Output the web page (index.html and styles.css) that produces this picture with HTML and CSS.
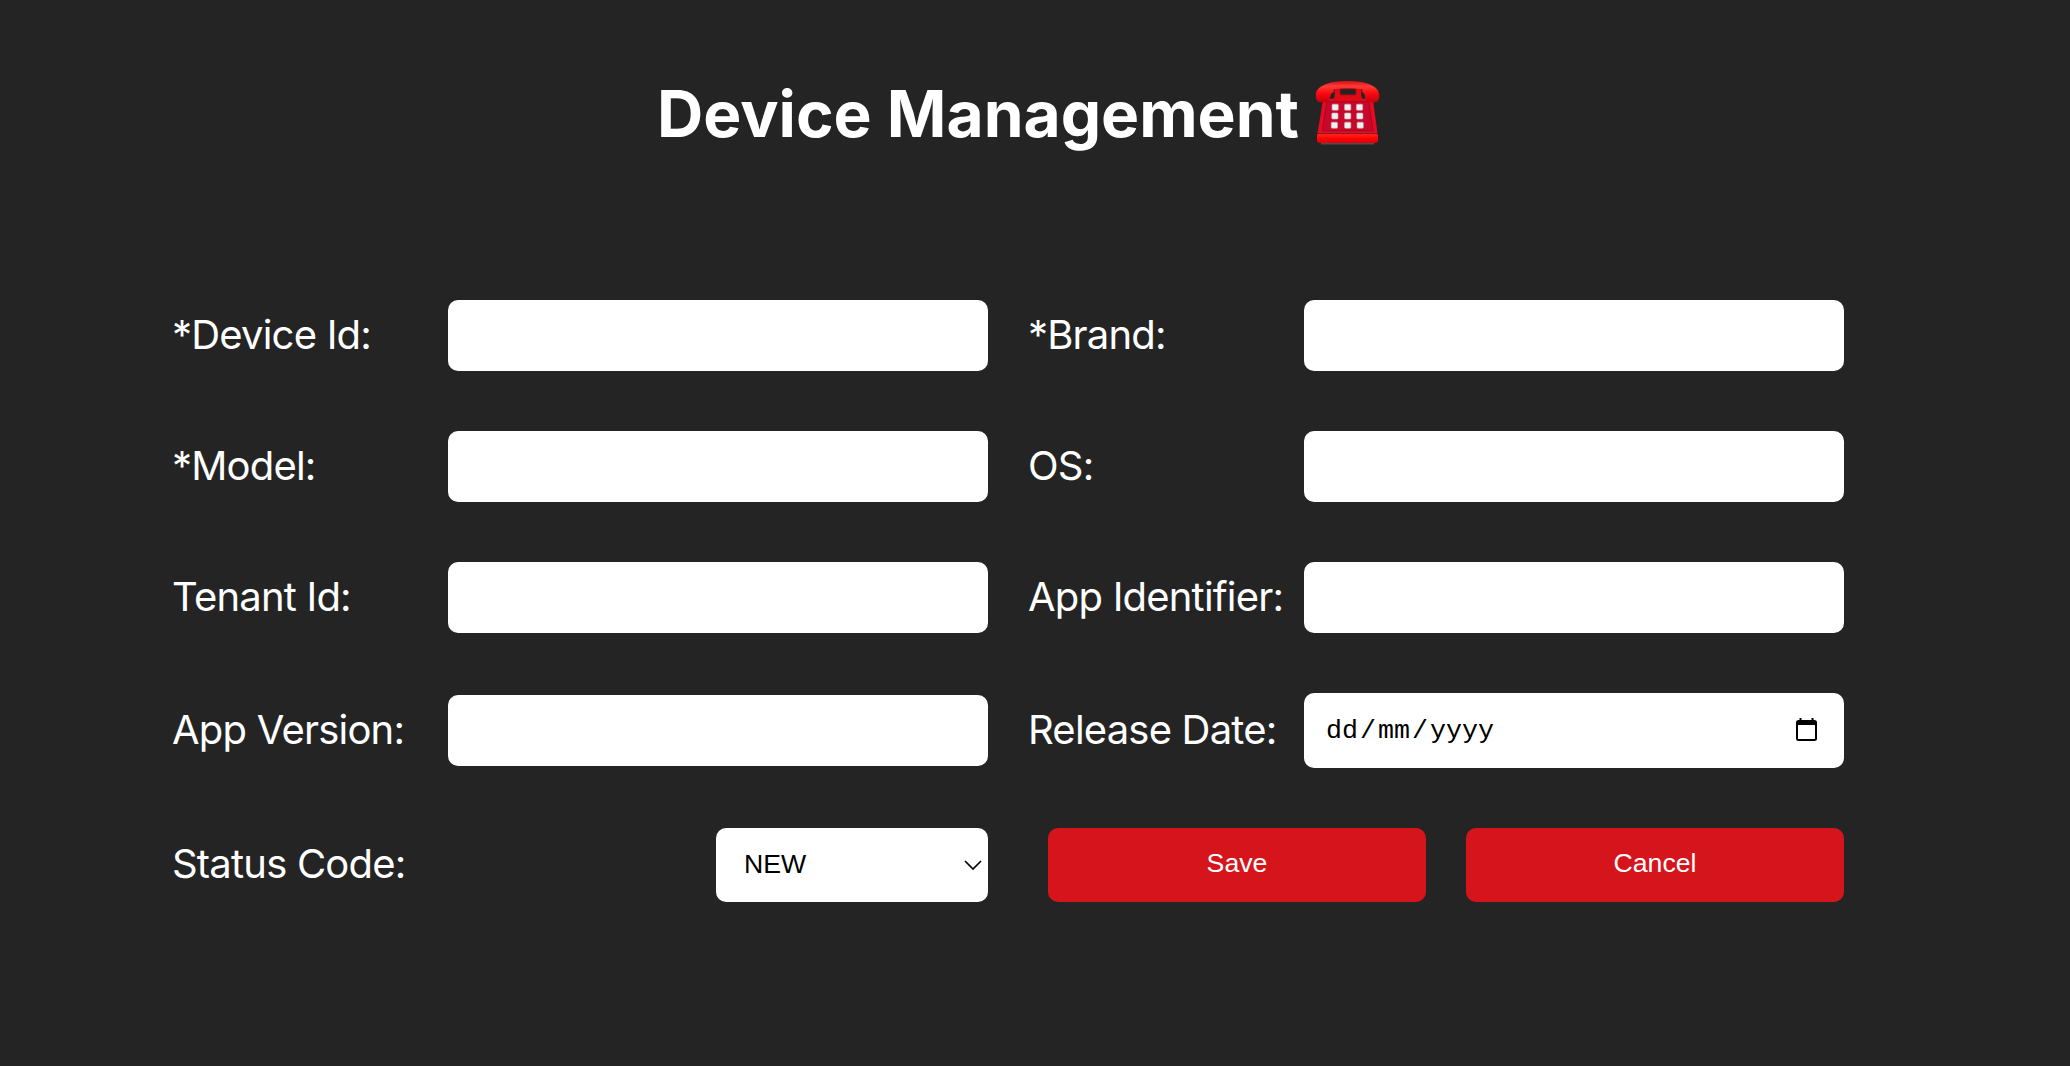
FILE: index.html
```html
<!DOCTYPE html>
<html lang="en">
<head>
<meta charset="utf-8">
<title>Device Management</title>
<link rel="stylesheet" href="styles.css">
</head>
<body>
<main class="page">
  <h1 class="title">
    <span class="title-text">Device Management</span>
    <svg class="phone" viewBox="0 0 66 66" aria-hidden="true">
      <defs>
        <linearGradient id="handset" x1="0" y1="0" x2="0" y2="1">
          <stop offset="0" stop-color="#d80c14"/><stop offset=".25" stop-color="#ff3b36"/><stop offset=".6" stop-color="#fa0710"/><stop offset="1" stop-color="#c4000c"/>
        </linearGradient>
        <linearGradient id="base" x1="0" y1="0" x2="0" y2="1">
          <stop offset="0" stop-color="#ff2420"/><stop offset=".5" stop-color="#ff0505"/><stop offset="1" stop-color="#dc0006"/>
        </linearGradient>
      </defs>
      <path d="M6 64h54v1.500H6z" fill="#4b4f50"/>
      <path d="M9 19h48q1.500 0 2 2l4.500 33H2.500L8 21q.5-2 1-2z" fill="#e50b20"/>
      <path d="M12 22h42.500l4.500 29.500H7.500z" fill="#c9062c" stroke="#a80526" stroke-width="1"/>
      <path d="M17 21l3-4V8h27v9l3 4z" fill="#e00a14"/>
      <rect x="25.500" y="9" width="16" height="6" rx="1.500" fill="#252324" stroke="#8e0c17"/>
      <path d="M.8 15C1 7 12 1 33 1s32 6 32.200 14q.3 7.500-4.200 7.500h-5q-4.500 0-5-4l-.6-3.500q-.4-1.800-2.400-2.500V9.500q-15-2.500-29 0v3q-2.500 1-3 2.500l-1 3.500q-1 4-5 4H5Q.8 22.500.8 15z" fill="url(#handset)"/>
      <path d="M3.500 54.500h59q1.500 0 1.500 2V61q0 3-3 3H5q-3 0-3-3v-4.500q0-2 1.500-2z" fill="url(#base)"/>
      <g fill="#eef1ef" stroke="#b9aeb0" stroke-width=".6">
        <rect x="17.300" y="24.500" width="6.400" height="6.200" rx="1"/><rect x="30" y="24.500" width="6.400" height="6.200" rx="1"/><rect x="42" y="24.500" width="6.400" height="6.200" rx="1"/>
        <rect x="17" y="33.500" width="6.400" height="6.200" rx="1"/><rect x="30" y="33.500" width="6.400" height="6.200" rx="1"/><rect x="42.300" y="33.500" width="6.400" height="6.200" rx="1"/>
        <rect x="16.500" y="42.800" width="6.400" height="6.200" rx="1"/><rect x="30" y="42.800" width="6.400" height="6.200" rx="1"/><rect x="42.700" y="42.800" width="6.400" height="6.200" rx="1"/>
      </g>
    </svg>
  </h1>

  <form class="form">
    <label class="label" for="device">*Device Id:</label>
    <input class="field" id="device" type="text">
    <label class="label second" for="brand">*Brand:</label>
    <input class="field" id="brand" type="text">

    <label class="label" for="model">*Model:</label>
    <input class="field" id="model" type="text">
    <label class="label second" for="os">OS:</label>
    <input class="field" id="os" type="text">

    <label class="label" for="tenant">Tenant Id:</label>
    <input class="field" id="tenant" type="text">
    <label class="label second" for="app">App Identifier:</label>
    <input class="field" id="app" type="text">

    <label class="label" for="version">App Version:</label>
    <input class="field" id="version" type="text">
    <span class="label second">Release Date:</span>
    <div class="field date">
      <span class="date-text"><span>dd</span><span class="slash">/</span><span>mm</span><span class="slash">/</span><span>yyyy</span></span>
      <svg class="calendar" viewBox="0 0 21 23" aria-hidden="true">
        <path fill-rule="evenodd" d="M3.500 0h2v2h10V0h2v2h1Q21 2 21 4.500v16q0 2.500-2.500 2.500h-16Q0 23 0 20.500v-16Q0 2 2.500 2h1zM2 7v14h17V7z"/>
      </svg>
    </div>

    <span class="label">Status Code:</span>
    <div class="field select">
      <span>NEW</span>
      <svg class="chevron" viewBox="0 0 18 10" aria-hidden="true"><path d="M1 1l8 8 8-8" fill="none" stroke="#000" stroke-width="1.700"/></svg>
    </div>
    <div class="actions">
      <button class="button" type="button">Save</button>
      <button class="button" type="button">Cancel</button>
    </div>
  </form>
</main>
</body>
</html>
```
FILE: styles.css
```css
* {
  box-sizing: border-box;
}

body {
  margin: 0;
  min-height: 100vh;
  background: #242424;
  color: #fff;
  font-family: Inter, "Liberation Sans", sans-serif;
}

.page {
  width: 1672px;
  margin-left: 172px;
  padding-top: 72px;
}

.title {
  display: flex;
  align-items: center;
  gap: 16px;
  height: 84px;
  margin: 0 0 144px;
  padding-left: 485px;
  font-size: 64px;
  font-weight: 700;
  line-height: 84px;
  white-space: nowrap;
}

.phone {
  width: 65px;
  height: 65px;
  margin-bottom: 3px;
}

.form {
  display: grid;
  grid-template-columns: 276px 540px 316px 540px;
  row-gap: 60px;
  align-items: center;
}

.label {
  padding-bottom: 2px;
  font-size: 40px;
  line-height: 60px;
  letter-spacing: -0.8px;
  white-space: nowrap;
}

.second {
  padding-left: 40px;
}

.field {
  width: 100%;
  height: 71px;
  padding: 0 20px;
  border: 0;
  border-radius: 10px;
  background: #fff;
  color: #000;
  font: 26.667px "Liberation Sans", Arial, sans-serif;
}

.date {
  display: flex;
  align-items: center;
  justify-content: space-between;
  height: 75px;
  padding: 0 27px 0 22px;
  font-family: "Liberation Mono", "Courier New", monospace;
}

.date-text {
  display: flex;
  padding-top: 1px;
}

.slash {
  padding: 0 2px;
}

.calendar {
  width: 21px;
  height: 23px;
  margin-bottom: 2px;
}

.select {
  display: flex;
  align-items: center;
  justify-content: space-between;
  justify-self: end;
  width: 272px;
  height: 74px;
  padding: 0 6px 2px 28px;
}

.chevron {
  width: 18px;
  height: 10px;
  margin-top: 2px;
}

.actions {
  display: grid;
  grid-column: 3 / 5;
  grid-template-columns: 1fr 1fr;
  gap: 40px;
  padding-left: 60px;
}

.button {
  height: 74px;
  padding: 0 0 3px;
  border: 0;
  border-radius: 10px;
  background: #d6141b;
  color: #fff;
  font: 26.667px "Liberation Sans", Arial, sans-serif;
}
```
